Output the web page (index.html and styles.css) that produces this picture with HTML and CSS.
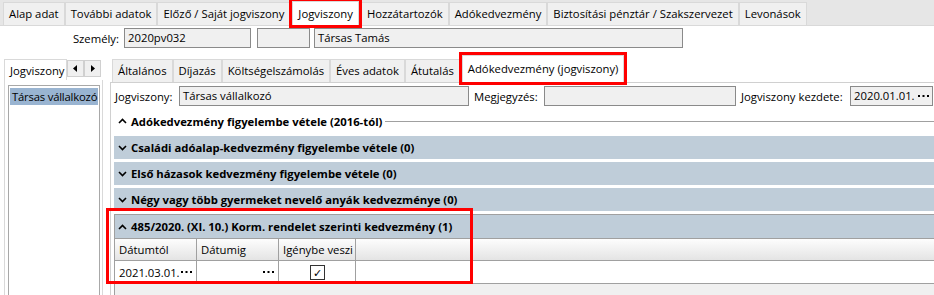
FILE: index.html
```html
<!DOCTYPE html>
<html lang="hu">
<head>
    <meta charset="UTF-8">
    <title>Jogviszony - Adókedvezmény</title>
    <link rel="stylesheet" href="styles.css">
</head>
<body>
    <div class="maintabs">
        <div class="tab">Alap adat</div>
        <div class="tab">További adatok</div>
        <div class="tab">Előző / Saját jogviszony</div>
        <div class="tab active marked">Jogviszony</div>
        <div class="tab">Hozzátartozók</div>
        <div class="tab">Adókedvezmény</div>
        <div class="tab">Biztosítási pénztár / Szakszervezet</div>
        <div class="tab">Levonások</div>
    </div>

    <div class="person">
        <span class="person-label">Személy:</span>
        <div class="field code">2020pv032</div>
        <div class="field small"></div>
        <div class="field name">Társas Tamás</div>
    </div>

    <div class="workarea">
        <div class="sidebar">
            <div class="side-head">
                <div class="side-tab">Jogviszony</div>
                <div class="scroll-btns">
                    <span class="scroll-btn"><svg width="5" height="7" viewBox="0 0 5 7"><path d="M4 0 L0 3.5 L4 7 Z" fill="#000"/></svg></span>
                    <span class="scroll-btn"><svg width="5" height="7" viewBox="0 0 5 7"><path d="M1 0 L5 3.5 L1 7 Z" fill="#000"/></svg></span>
                </div>
            </div>
            <div class="side-page">
                <div class="side-list">
                    <div class="side-item selected">Társas vállalkozó</div>
                </div>
            </div>
        </div>

        <div class="content">
            <div class="subtabs">
                <div class="subtab">Általános</div>
                <div class="subtab">Díjazás</div>
                <div class="subtab">Költségelszámolás</div>
                <div class="subtab">Éves adatok</div>
                <div class="subtab">Átutalás</div>
                <div class="subtab active marked">Adókedvezmény (jogviszony)</div>
            </div>

            <div class="page">
                <div class="fields">
                    <span class="lbl lbl-type">Jogviszony:</span>
                    <div class="field f-type">Társas vállalkozó</div>
                    <span class="lbl lbl-note">Megjegyzés:</span>
                    <div class="field f-note"></div>
                    <span class="lbl lbl-start">Jogviszony kezdete:</span>
                    <div class="field f-date">2020.01.01.<svg class="dots" width="11" height="2" viewBox="0 0 11 2"><rect x="0" width="2" height="2"/><rect x="4.5" width="2" height="2"/><rect x="9" width="2" height="2"/></svg></div>
                </div>

                <div class="section plain">
                    <svg class="chev" width="9" height="6" viewBox="0 0 9 6"><path d="M1 5 L4.5 1.5 L8 5" fill="none" stroke="#000" stroke-width="1.6"/></svg>
                    <span class="sec-title">Adókedvezmény figyelembe vétele (2016-tól)</span>
                    <span class="sec-rule"></span>
                </div>
                <div class="section bar">
                    <svg class="chev" width="9" height="6" viewBox="0 0 9 6"><path d="M1 1 L4.5 4.5 L8 1" fill="none" stroke="#000" stroke-width="1.6"/></svg>
                    <span class="sec-title">Családi adóalap-kedvezmény figyelembe vétele (0)</span>
                </div>
                <div class="section bar">
                    <svg class="chev" width="9" height="6" viewBox="0 0 9 6"><path d="M1 1 L4.5 4.5 L8 1" fill="none" stroke="#000" stroke-width="1.6"/></svg>
                    <span class="sec-title">Első házasok kedvezmény figyelembe vétele (0)</span>
                </div>
                <div class="section bar">
                    <svg class="chev" width="9" height="6" viewBox="0 0 9 6"><path d="M1 1 L4.5 4.5 L8 1" fill="none" stroke="#000" stroke-width="1.6"/></svg>
                    <span class="sec-title">Négy vagy több gyermeket nevelő anyák kedvezménye (0)</span>
                </div>

                <div class="group">
                    <div class="section bar framed">
                        <svg class="chev" width="9" height="6" viewBox="0 0 9 6"><path d="M1 5 L4.5 1.5 L8 5" fill="none" stroke="#000" stroke-width="1.6"/></svg>
                        <span class="sec-title">485/2020. (XI. 10.) Korm. rendelet szerinti kedvezmény (1)</span>
                    </div>
                    <div class="grid">
                        <div class="grid-row head">
                            <div class="cell c1">Dátumtól</div>
                            <div class="cell c2">Dátumig</div>
                            <div class="cell c3">Igénybe veszi</div>
                            <div class="cell rest"></div>
                        </div>
                        <div class="grid-row">
                            <div class="cell c1">2021.03.01.<svg class="dots" width="11" height="2" viewBox="0 0 11 2"><rect x="0" width="2" height="2"/><rect x="4.5" width="2" height="2"/><rect x="9" width="2" height="2"/></svg></div>
                            <div class="cell c2 end"><svg class="dots" width="11" height="2" viewBox="0 0 11 2"><rect x="0" width="2" height="2"/><rect x="4.5" width="2" height="2"/><rect x="9" width="2" height="2"/></svg></div>
                            <div class="cell c3 center"><span class="check">✓</span></div>
                            <div class="cell rest"></div>
                        </div>
                    </div>
                </div>

                <div class="highlight-box"></div>
            </div>
        </div>
    </div>
</body>
</html>
```

FILE: styles.css
```css
body {
    margin: 0;
    width: 934px;
    height: 295px;
    overflow: hidden;
    background: #fff;
    color: #000;
    font-family: "Open Sans", "Noto Sans", sans-serif;
    font-size: 11.3px;
}

/* top tab strip */
.maintabs {
    display: flex;
    align-items: flex-end;
    height: 26px;
    padding-left: 3px;
    box-sizing: border-box;
    background: #e6e6e6;
    border-bottom: 1px solid #d9d9d9;
}
.tab {
    height: 22px;
    line-height: 22px;
    padding: 0 5px;
    background: #f0f0f0;
    border: 1px solid #d9d9d9;
    border-bottom: none;
    white-space: nowrap;
}
.tab.active {
    background: #fff;
    height: 23px;
    line-height: 23px;
    margin: 0 2px;
}
.marked {
    outline: 3px solid #f00;
    position: relative;
    z-index: 2;
}

/* person row */
.person {
    display: flex;
    align-items: center;
    height: 24px;
}
.person-label {
    width: 119px;
    text-align: right;
    margin-right: 5px;
}
.field {
    height: 20px;
    line-height: 18px;
    box-sizing: border-box;
    border: 1px solid #8a8a8a;
    background: #f0f0f0;
    padding: 0 3px;
    white-space: nowrap;
    overflow: hidden;
}
.field.code { width: 127px; }
.field.small { width: 53px; margin-left: 6px; }
.field.name { width: 369px; margin-left: 4px; }

/* work area */
.workarea {
    display: flex;
    height: 245px;
    overflow: hidden;
}
.sidebar {
    width: 110px;
    flex: none;
    display: flex;
    flex-direction: column;
}
.side-head {
    flex: none;
    display: flex;
    align-items: flex-end;
    height: 30px;
    padding-left: 4px;
}
.side-tab {
    width: 63px;
    height: 21px;
    line-height: 21px;
    box-sizing: border-box;
    padding-left: 5px;
    border: 1px solid #d9d9d9;
    border-bottom: none;
    overflow: hidden;
    white-space: nowrap;
}
.scroll-btns {
    display: flex;
    align-self: flex-start;
    margin-top: 10px;
}
.scroll-btn {
    width: 17px;
    height: 17px;
    box-sizing: border-box;
    background: #f0f0f0;
    border: 1px solid #d0d0d0;
    display: flex;
    align-items: center;
    justify-content: center;
}
.side-page {
    flex: 1;
    margin-left: 4px;
    width: 99px;
    box-sizing: border-box;
    border-left: 1px solid #d9d9d9;
    border-right: 1px solid #d9d9d9;
    padding: 5px 2px 0 3px;
}
.side-list {
    height: 100%;
    box-sizing: border-box;
    border: 1px solid #a8a8a8;
    border-bottom: none;
    padding: 2px 1px;
}
.side-item {
    height: 17px;
    line-height: 17px;
    padding-left: 2px;
    white-space: nowrap;
    letter-spacing: -0.2px;
}
.side-item.selected { background: #99b4d1; }

/* content */
.content {
    flex: 1;
    display: flex;
    flex-direction: column;
}
.subtabs {
    flex: none;
    display: flex;
    align-items: flex-end;
    height: 32px;
    padding-left: 2px;
}
.subtab {
    height: 22px;
    line-height: 22px;
    padding: 0 5px;
    background: #f0f0f0;
    border: 1px solid #d9d9d9;
    border-bottom: none;
    white-space: nowrap;
}
.subtab.active {
    background: #fff;
    height: 26px;
    line-height: 26px;
    margin-left: 2px;
}
.page {
    flex: 1;
    position: relative;
    border-top: 1px solid #d0d0d0;
    border-left: 1px solid #d0d0d0;
    padding-left: 3px;
}

.fields {
    display: flex;
    align-items: center;
    height: 26px;
}
.lbl {
    flex: none;
    box-sizing: border-box;
    white-space: nowrap;
}
.lbl-type { width: 65px; padding-left: 1px; }
.lbl-note { width: 75px; padding-left: 5px; }
.lbl-start { width: 114px; padding-left: 5px; }
.field.f-type { width: 290px; }
.field.f-note { width: 192px; }
.field.f-date {
    width: 83px;
    display: flex;
    align-items: center;
    justify-content: space-between;
}
.dots { flex: none; fill: #000; }

/* accordion */
.section {
    display: flex;
    align-items: center;
    height: 23px;
    padding-left: 4px;
    font-weight: bold;
    white-space: nowrap;
}
.section.plain { height: 24px; }
.section.bar {
    background: #bfcdd9;
    margin-top: 3px;
}
.chev { margin-right: 4px; flex: none; }
.sec-rule {
    flex: 1;
    height: 1px;
    background: #a0a0a0;
    margin-left: 3px;
}
.group {
    background: #f0f0f0;
    border-left: 1px solid #a0a0a0;
    height: 100px;
}
.section.framed {
    border-top: 1px solid #a0a0a0;
    border-bottom: 1px solid #a0a0a0;
    padding-left: 3px;
}

/* grid */
.grid-row {
    display: flex;
    height: 22px;
    background: #fff;
    border-bottom: 1px solid #a0a0a0;
}
.grid-row.head {
    height: 21px;
    background: linear-gradient(#fdfdfd, #e4e4e4);
}
.cell {
    box-sizing: border-box;
    border-right: 1px solid #a0a0a0;
    padding: 0 4px;
    display: flex;
    align-items: center;
    justify-content: space-between;
    white-space: nowrap;
}
.cell.c1 { width: 82px; }
.cell.c2 { width: 82px; }
.cell.c3 { width: 77px; }
.cell.end { justify-content: flex-end; }
.cell.center { justify-content: center; }
.cell.rest { flex: 1; border-right: none; }
.check {
    width: 15px;
    height: 15px;
    box-sizing: border-box;
    border: 1px solid #333;
    display: flex;
    align-items: center;
    justify-content: center;
    font-size: 11px;
    line-height: 1;
}

.highlight-box {
    position: absolute;
    left: -5px;
    top: 125px;
    width: 367px;
    height: 76px;
    box-sizing: border-box;
    border: 3px solid #f00;
    pointer-events: none;
}
```
